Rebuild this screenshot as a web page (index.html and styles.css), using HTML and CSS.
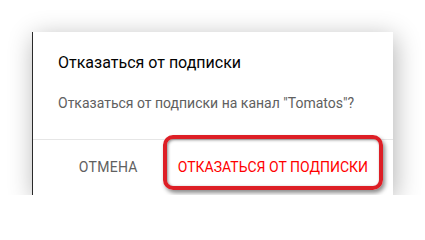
FILE: index.html
```html
<!DOCTYPE html>
<html lang="ru">
<head>
<meta charset="utf-8">
<link rel="stylesheet" href="styles.css">
</head>
<body>
<div class="dialog">
  <div class="content">
    <div class="title">Отказаться от подписки</div>
    <div class="message">Отказаться от подписки на канал "Tomatos"?</div>
  </div>
  <div class="actions">
    <button class="btn cancel">Отмена</button>
    <button class="btn confirm">Отказаться от подписки</button>
  </div>
</div>
</body>
</html>
```
FILE: styles.css
```css
html, body {
  margin: 0;
  background: #fff;
}
body {
  padding: 32px 0 0 32px;
  font-family: Roboto, "Noto Sans", sans-serif;
}
.dialog {
  width: 360px;
  height: 163px;
  background: #fff;
  border-left: 1px solid #2a2a2a;
  box-shadow: 2px 5px 24px rgba(0, 0, 0, 0.3);
  display: flex;
  flex-direction: column;
}
.content {
  padding: 21px 24px 26px 25px;
  border-bottom: 1px solid #e6e6e6;
}
.title {
  font-size: 16px;
  line-height: 20px;
  color: #030303;
}
.message {
  margin-top: 20px;
  font-size: 14px;
  line-height: 20px;
  color: #606060;
}
.actions {
  display: flex;
  justify-content: flex-end;
  gap: 8px;
  padding: 7px 9px 0 0;
}
.btn {
  font-family: Roboto, "Noto Sans", sans-serif;
  font-size: 14px;
  font-weight: 400;
  line-height: 20px;
  padding: 10px 16px;
  background: none;
  border: 0;
  text-transform: uppercase;
  letter-spacing: 0.02em;
}
.cancel {
  color: #606060;
}
.confirm {
  color: #ff0000;
  position: relative;
  letter-spacing: 0;
}
.confirm::after {
  content: "";
  position: absolute;
  top: -12px;
  left: 1px;
  right: 1px;
  bottom: -3px;
  border: 4px solid #dd1f26;
  border-radius: 10px;
  box-shadow: 2px 3px 4px rgba(0, 0, 0, 0.45), inset 1px 1px 3px rgba(0, 0, 0, 0.45);
}
```
